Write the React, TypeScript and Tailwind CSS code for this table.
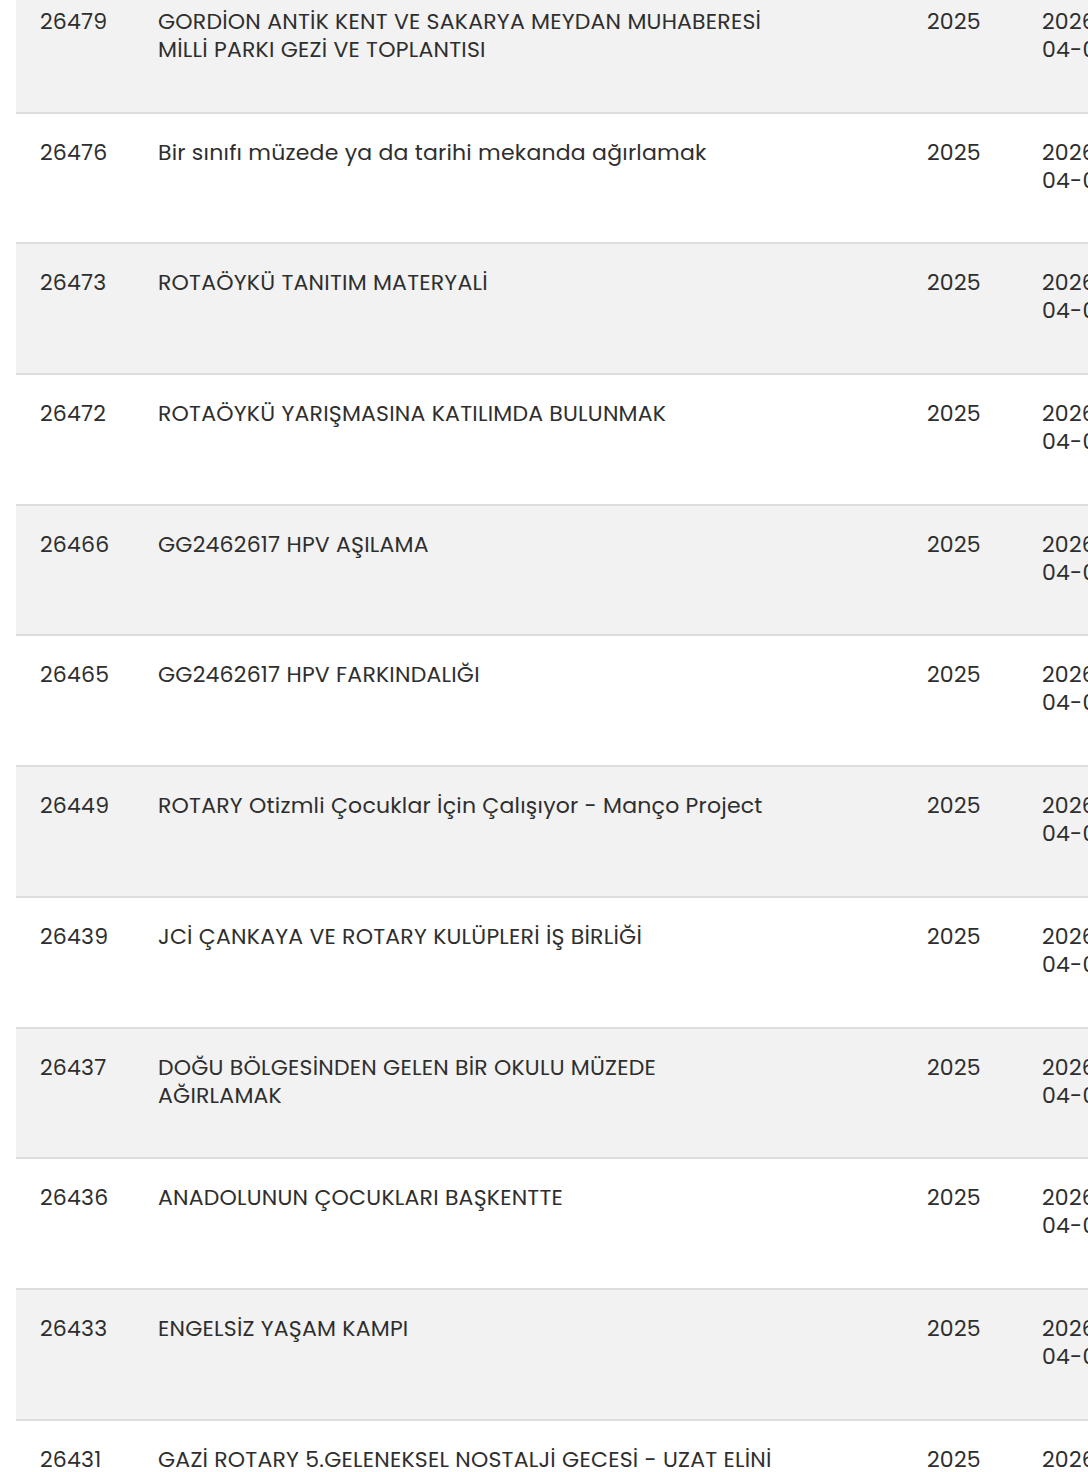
import React from 'react';

interface Row {
  id: string;
  title: string[];
  year: string;
  date: string[];
}

const rows: Row[] = [
  { id: '26479', title: ['GORDİON ANTİK KENT VE SAKARYA MEYDAN MUHABERESİ', 'MİLLİ PARKI GEZİ VE TOPLANTISI'], year: '2025', date: ['2026-', '04-01'] },
  { id: '26476', title: ['Bir sınıfı müzede ya da tarihi mekanda ağırlamak'], year: '2025', date: ['2026-', '04-01'] },
  { id: '26473', title: ['ROTAÖYKÜ TANITIM MATERYALİ'], year: '2025', date: ['2026-', '04-01'] },
  { id: '26472', title: ['ROTAÖYKÜ YARIŞMASINA KATILIMDA BULUNMAK'], year: '2025', date: ['2026-', '04-01'] },
  { id: '26466', title: ['GG2462617 HPV AŞILAMA'], year: '2025', date: ['2026-', '04-01'] },
  { id: '26465', title: ['GG2462617 HPV FARKINDALIĞI'], year: '2025', date: ['2026-', '04-01'] },
  { id: '26449', title: ['ROTARY Otizmli Çocuklar İçin Çalışıyor - Manço Project'], year: '2025', date: ['2026-', '04-01'] },
  { id: '26439', title: ['JCİ ÇANKAYA VE ROTARY KULÜPLERİ İŞ BİRLİĞİ'], year: '2025', date: ['2026-', '04-01'] },
  { id: '26437', title: ['DOĞU BÖLGESİNDEN GELEN BİR OKULU MÜZEDE', 'AĞIRLAMAK'], year: '2025', date: ['2026-', '04-01'] },
  { id: '26436', title: ['ANADOLUNUN ÇOCUKLARI BAŞKENTTE'], year: '2025', date: ['2026-', '04-01'] },
  { id: '26433', title: ['ENGELSİZ YAŞAM KAMPI'], year: '2025', date: ['2026-', '04-01'] },
  { id: '26431', title: ['GAZİ ROTARY 5.GELENEKSEL NOSTALJİ GECESİ - UZAT ELİNİ'], year: '2025', date: ['2026-', '04-01'] },
];

export default function App() {
  return (
    <div
      className="h-[1472px] w-full overflow-hidden bg-white text-[22px] leading-[28px] tracking-[0.01em] text-[#2e2e2e]"
      style={{ fontFamily: 'Poppins, Inter, "Noto Sans", sans-serif' }}
    >
      <div className="-mt-[17px] ml-4 w-[1180px]">
        {rows.map((r, i) => (
          <div
            key={r.id}
            className={`grid h-[130.7px] grid-cols-[118px_769px_115px_178px] border-b-2 border-[#dddddd] ${
              i % 2 === 0 ? 'bg-[#f2f2f2]' : 'bg-white'
            }`}
          >
            <div className="pl-6 pt-[25px]">{r.id}</div>
            <div className="pl-6 pt-[25px]">
              {r.title.map((t) => (
                <div key={t} className="whitespace-nowrap">{t}</div>
              ))}
            </div>
            <div className="pl-6 pt-[25px]">{r.year}</div>
            <div className="pl-6 pt-[25px]">
              {r.date.map((d) => (
                <div key={d} className="whitespace-nowrap">{d}</div>
              ))}
            </div>
          </div>
        ))}
      </div>
    </div>
  );
}
